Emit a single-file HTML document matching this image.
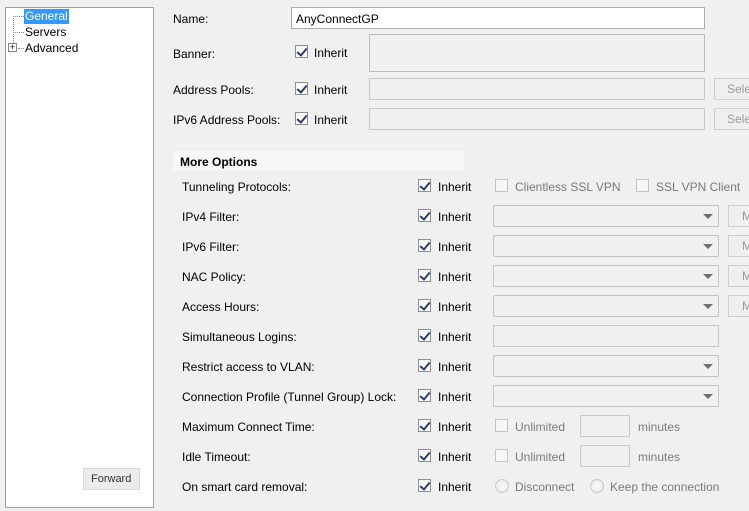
<!DOCTYPE html>
<html><head><style>
body{margin:0;width:749px;height:511px;background:#f0f0f0;font:12px "Liberation Sans",sans-serif;color:#000;position:relative;overflow:hidden}
.a{position:absolute;white-space:nowrap}
.l{position:absolute;white-space:nowrap;transform:translateY(-50%);margin-top:1px}
.cb{position:absolute;width:13px;height:13px;border:1px solid #8f8f8f;background:linear-gradient(#f4f4f4,#fff);box-sizing:border-box}
.cb.c::after{content:"";position:absolute;left:3px;top:0px;width:4px;height:8px;border:solid #2a3d6e;border-width:0 2px 2px 0;transform:rotate(40deg)}
.cb.d{border-color:#c5c5c5;background:#f6f6f6}
.in{position:absolute;background:#fff;border:1px solid #acacac;box-sizing:border-box}
.in.d{background:#f0f0f0;border-color:#cfcfcf}
.cmb{position:absolute;background:#f0f0f0;border:1px solid #c3c3c3;box-sizing:border-box;border-radius:2px}
.cmb::after{content:"";position:absolute;right:5px;top:8px;border:5px solid transparent;border-top:5px solid #707070;border-bottom:0}
.btn{position:absolute;border:1px solid #cfcfcf;background:#efefef;box-sizing:border-box;color:#9a9a9a;padding-left:12px;line-height:20px;overflow:hidden}
.g{color:#7a7a7a}
.rd{position:absolute;width:14px;height:14px;border:1px solid #c8c8c8;border-radius:50%;background:radial-gradient(#fafafa,#e4e4e4);box-sizing:border-box}
</style></head><body>
<div class="a" style="left:5px;top:7px;width:149px;height:501px;background:#fff;border:1px solid #a0a0a0;box-sizing:border-box"></div>
<div class="a" style="left:13px;top:16px;width:1px;height:33px;border-left:1px dotted #888"></div>
<div class="a" style="left:13px;top:16px;width:11px;border-top:1px dotted #888"></div>
<div class="a" style="left:13px;top:32px;width:11px;border-top:1px dotted #888"></div>
<div class="a" style="left:18px;top:48px;width:6px;border-top:1px dotted #888"></div>
<div class="a" style="left:8px;top:43px;width:9px;height:9px;border:1px solid #888;background:#fff;box-sizing:border-box;font-size:9px;line-height:7px;text-align:center">+</div>
<div class="a" style="left:24px;top:9px;background:#3399ff;color:#fff;padding:0 1px;line-height:15px">General</div>
<div class="a" style="left:25px;top:25px;line-height:15px">Servers</div>
<div class="a" style="left:25px;top:41px;line-height:15px">Advanced</div>
<div class="btn" style="left:83px;top:468px;width:57px;height:22px;color:#333;padding-left:7px;background:#ececec;border-color:#d8d8d8;font-size:11px">Forward</div>

<div class="l" style="left:173px;top:18px">Name:</div>
<div class="in" style="left:291px;top:7px;width:414px;height:22px;padding:4px 4px 2px">AnyConnectGP</div>
<div class="l" style="left:173px;top:53px">Banner:</div>
<div class="cb c" style="left:295px;top:45px"></div><div class="l" style="left:314px;top:52px">Inherit</div>
<div class="in d" style="left:369px;top:34px;width:336px;height:38px;border-color:#bdbdbd"></div>
<div class="l" style="left:173px;top:89px">Address Pools:</div>
<div class="cb c" style="left:295px;top:82px"></div><div class="l" style="left:314px;top:89px">Inherit</div>
<div class="in d" style="left:369px;top:78px;width:336px;height:22px;border-color:#c8c8c8"></div>
<div class="btn" style="left:714px;top:78px;width:40px;height:22px">Select</div>
<div class="l" style="left:173px;top:119px">IPv6 Address Pools:</div>
<div class="cb c" style="left:295px;top:112px"></div><div class="l" style="left:314px;top:119px">Inherit</div>
<div class="in d" style="left:369px;top:108px;width:336px;height:22px;border-color:#c8c8c8"></div>
<div class="btn" style="left:714px;top:108px;width:40px;height:22px">Select</div>

<div class="a" style="left:173px;top:151px;width:291px;height:20px;background:#f7f7f7"></div>
<div class="l" style="left:180px;top:161px;font-weight:bold">More Options</div>

<div class="l" style="left:182px;top:186px">Tunneling Protocols:</div>
<div class="cb c" style="left:418px;top:179px"></div><div class="l" style="left:438px;top:186px">Inherit</div>
<div class="cb d" style="left:495px;top:179px"></div><div class="l g" style="left:515px;top:186px">Clientless SSL VPN</div>
<div class="cb d" style="left:636px;top:179px"></div><div class="l g" style="left:656px;top:186px">SSL VPN Client</div>

<div class="l" style="left:182px;top:216px">IPv4 Filter:</div>
<div class="cb c" style="left:418px;top:209px"></div><div class="l" style="left:438px;top:216px">Inherit</div>
<div class="cmb" style="left:493px;top:205px;width:226px;height:22px"></div><div class="btn" style="left:728px;top:205px;width:30px;height:22px;padding-left:13px">M</div>
<div class="l" style="left:182px;top:246px">IPv6 Filter:</div>
<div class="cb c" style="left:418px;top:239px"></div><div class="l" style="left:438px;top:246px">Inherit</div>
<div class="cmb" style="left:493px;top:235px;width:226px;height:22px"></div><div class="btn" style="left:728px;top:235px;width:30px;height:22px;padding-left:13px">M</div>
<div class="l" style="left:182px;top:276px">NAC Policy:</div>
<div class="cb c" style="left:418px;top:269px"></div><div class="l" style="left:438px;top:276px">Inherit</div>
<div class="cmb" style="left:493px;top:265px;width:226px;height:22px"></div><div class="btn" style="left:728px;top:265px;width:30px;height:22px;padding-left:13px">M</div>
<div class="l" style="left:182px;top:306px">Access Hours:</div>
<div class="cb c" style="left:418px;top:299px"></div><div class="l" style="left:438px;top:306px">Inherit</div>
<div class="cmb" style="left:493px;top:295px;width:226px;height:22px"></div><div class="btn" style="left:728px;top:295px;width:30px;height:22px;padding-left:13px">M</div>
<div class="l" style="left:182px;top:336px">Simultaneous Logins:</div>
<div class="cb c" style="left:418px;top:329px"></div><div class="l" style="left:438px;top:336px">Inherit</div>
<div class="in d" style="left:493px;top:325px;width:226px;height:22px;border-color:#c8c8c8"></div>
<div class="l" style="left:182px;top:366px">Restrict access to VLAN:</div>
<div class="cb c" style="left:418px;top:359px"></div><div class="l" style="left:438px;top:366px">Inherit</div>
<div class="cmb" style="left:493px;top:355px;width:226px;height:22px"></div>
<div class="l" style="left:182px;top:396px">Connection Profile (Tunnel Group) Lock:</div>
<div class="cb c" style="left:418px;top:389px"></div><div class="l" style="left:438px;top:396px">Inherit</div>
<div class="cmb" style="left:493px;top:385px;width:226px;height:22px"></div>
<div class="l" style="left:182px;top:426px">Maximum Connect Time:</div>
<div class="cb c" style="left:418px;top:419px"></div><div class="l" style="left:438px;top:426px">Inherit</div>
<div class="cb d" style="left:495px;top:419px"></div><div class="l g" style="left:515px;top:426px">Unlimited</div>
<div class="in d" style="left:580px;top:415px;width:50px;height:22px;border-color:#c8c8c8"></div><div class="l g" style="left:638px;top:426px">minutes</div>
<div class="l" style="left:182px;top:456px">Idle Timeout:</div>
<div class="cb c" style="left:418px;top:449px"></div><div class="l" style="left:438px;top:456px">Inherit</div>
<div class="cb d" style="left:495px;top:449px"></div><div class="l g" style="left:515px;top:456px">Unlimited</div>
<div class="in d" style="left:580px;top:445px;width:50px;height:22px;border-color:#c8c8c8"></div><div class="l g" style="left:638px;top:456px">minutes</div>
<div class="l" style="left:182px;top:486px">On smart card removal:</div>
<div class="cb c" style="left:418px;top:479px"></div><div class="l" style="left:438px;top:486px">Inherit</div>
<div class="rd" style="left:495px;top:479px"></div><div class="l g" style="left:515px;top:486px">Disconnect</div>
<div class="rd" style="left:590px;top:479px"></div><div class="l g" style="left:610px;top:486px">Keep the connection</div>
</body></html>
